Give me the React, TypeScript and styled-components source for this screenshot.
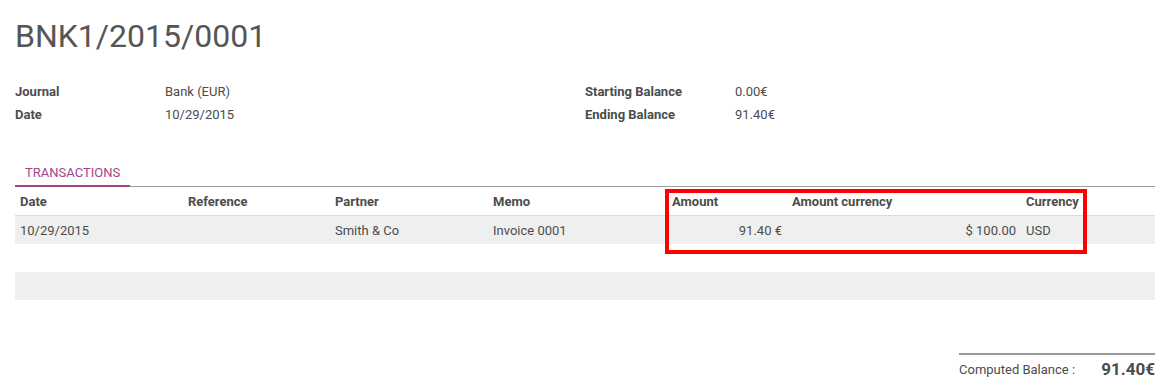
import styled, { createGlobalStyle } from "styled-components";

const GlobalStyle = createGlobalStyle`
  html, body {
    margin: 0;
    padding: 0;
    background: #fff;
  }
  body {
    font-family: Roboto, "Noto Sans", "Liberation Sans", sans-serif;
    font-size: 13px;
    color: #4c4c4c;
  }
`

const Sheet = styled.div`
  position: relative;
  width: 1140px;
  padding: 18px 15px 0;
`

const Title = styled.h1`
  margin: 0;
  font-size: 32px;
  line-height: 36px;
  font-weight: 400;
  color: #555;
`

const InfoGrid = styled.div`
  display: grid;
  grid-template-columns: 1fr 1fr;
  margin-top: 26px;
`

const Group = styled.div`
  display: grid;
  grid-template-columns: 150px 1fr;
  grid-auto-rows: 23px;
  align-items: center;
`

const Label = styled.div`
  font-weight: 700;
`

const Value = styled.div``

const Tabs = styled.div`
  display: flex;
  margin-top: 34px;
  border-bottom: 1px solid #9f9f9f;
`

const Tab = styled.div<{ active?: boolean }>`
  padding: 4px 10px 3px;
  line-height: 18px;
  margin-bottom: -1px;
  text-transform: uppercase;
  color: #a24689;
  border-bottom: 2px solid ${p => (p.active ? "#a24689" : "transparent")};
`

const Table = styled.table`
  width: 1140px;
  border-collapse: collapse;
  table-layout: fixed;
`

const HeadCell = styled.th`
  height: 28px;
  padding: 0 5px;
  text-align: left;
  font-weight: 700;
  border-bottom: 1px solid #dcdcdc;
`

const Row = styled.tr<{ striped?: boolean }>`
  background: ${p => (p.striped ? "#eef0ef" : "#fff")};
`

const Cell = styled.td<{ numeric?: boolean }>`
  height: 28px;
  padding: 0 5px;
  text-align: ${p => (p.numeric ? "right" : "left")};
  white-space: nowrap;
`

const Footer = styled.div`
  display: flex;
  justify-content: flex-end;
  margin-top: 53px;
`

const Total = styled.div`
  width: 196px;
  display: flex;
  justify-content: space-between;
  align-items: center;
  height: 28px;
  border-top: 2px solid #999;
`

const TotalValue = styled.span`
  font-size: 17px;
  font-weight: 700;
`

const Highlight = styled.div`
  position: absolute;
  left: 665px;
  top: 189px;
  width: 422px;
  height: 65px;
  box-sizing: border-box;
  border: 4px solid #ff0000;
  pointer-events: none;
`

const columns = [
  { name: "Date", width: 168 },
  { name: "Reference", width: 147 },
  { name: "Partner", width: 158 },
  { name: "Memo", width: 179 },
  { name: "Amount", width: 120 },
  { name: "Amount currency", width: 234 },
  { name: "Currency", width: 62 },
  { name: "", width: 72 },
];

export default function App() {
  return (
    <>
      <GlobalStyle />
      <Sheet>
        <Title>BNK1/2015/0001</Title>
        <InfoGrid>
          <Group>
            <Label>Journal</Label>
            <Value>Bank (EUR)</Value>
            <Label>Date</Label>
            <Value>10/29/2015</Value>
          </Group>
          <Group>
            <Label>Starting Balance</Label>
            <Value>0.00€</Value>
            <Label>Ending Balance</Label>
            <Value>91.40€</Value>
          </Group>
        </InfoGrid>
        <Tabs>
          <Tab active>Transactions</Tab>
        </Tabs>
        <Table>
          <colgroup>
            {columns.map((c, i) => (
              <col key={i} style={{ width: c.width }} />
            ))}
          </colgroup>
          <thead>
            <tr>
              {columns.map((c, i) => (
                <HeadCell key={i}>{c.name}</HeadCell>
              ))}
            </tr>
          </thead>
          <tbody>
            <Row striped>
              <Cell>10/29/2015</Cell>
              <Cell></Cell>
              <Cell>Smith &amp; Co</Cell>
              <Cell>Invoice 0001</Cell>
              <Cell numeric>91.40 €</Cell>
              <Cell numeric>$ 100.00</Cell>
              <Cell>USD</Cell>
              <Cell></Cell>
            </Row>
            <Row>
              <Cell colSpan={8}></Cell>
            </Row>
            <Row striped>
              <Cell colSpan={8}></Cell>
            </Row>
          </tbody>
        </Table>
        <Footer>
          <Total>
            <span>Computed Balance :</span>
            <TotalValue>91.40€</TotalValue>
          </Total>
        </Footer>
        <Highlight />
      </Sheet>
    </>
  );
}
